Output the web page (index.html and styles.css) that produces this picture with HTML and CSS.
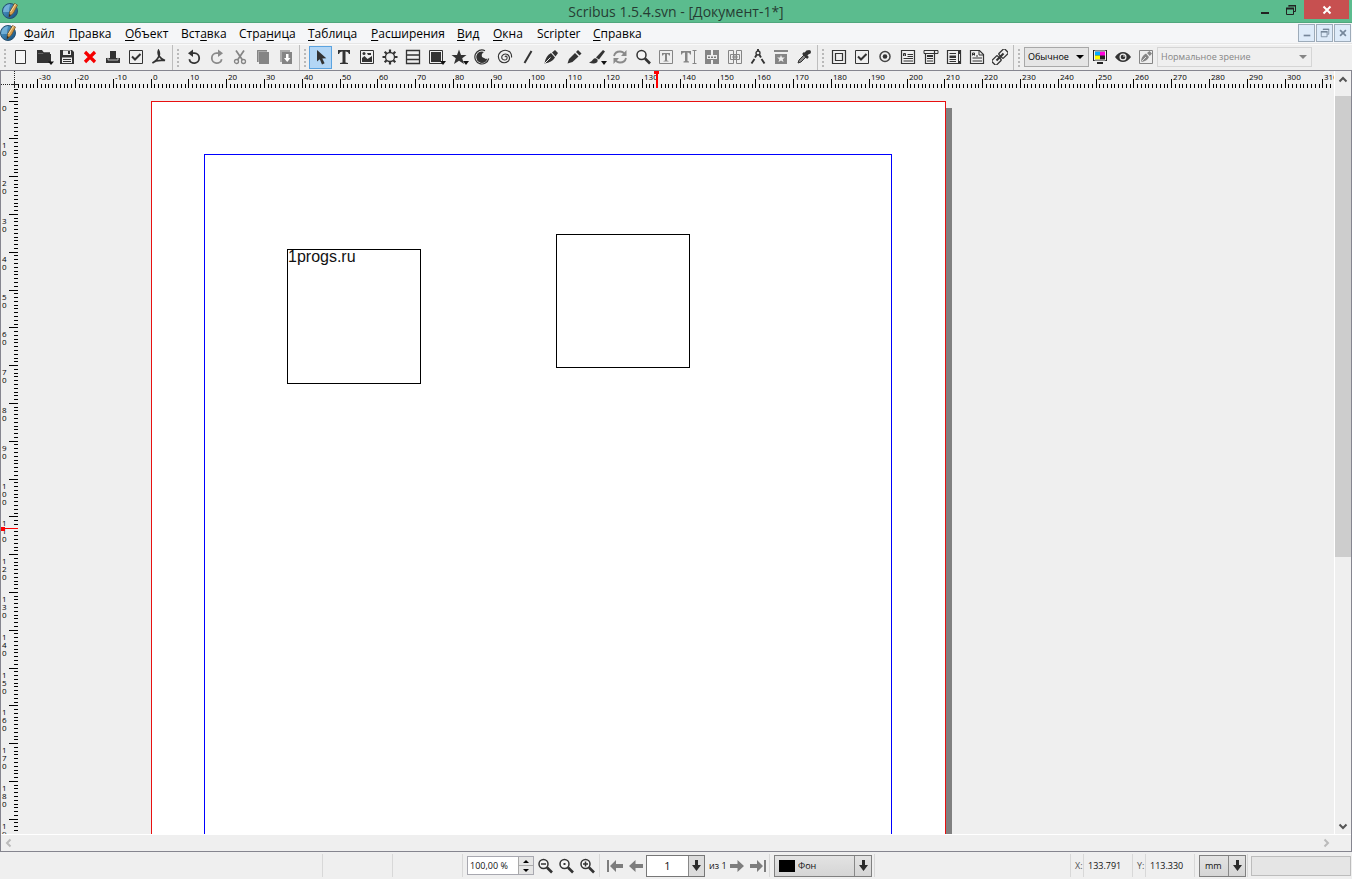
FILE: index.html
```html
<!DOCTYPE html>
<html lang="ru">
<head>
<meta charset="utf-8">
<title>Scribus 1.5.4.svn - [Документ-1*]</title>
<link rel="stylesheet" href="styles.css">
</head>
<body>
<svg class="sprite" aria-hidden="true">
  <defs>
    <linearGradient id="ball" x1="0" y1="0" x2="1" y2="1"><stop offset="0" stop-color="#5da9d8"/><stop offset="1" stop-color="#0d4a7c"/></linearGradient>
    <symbol id="logo" viewBox="0 0 18 18"><circle cx="9" cy="9" r="7.500" fill="url(#ball)" stroke="#27506e"/><path d="M2 10Q3 3 9 2Q8 6 8 10z" fill="#8fc7e8" opacity=".6"/><path d="M8 15L8.600 10L13.500 1.500L16.500 3L12.500 11z" fill="#d7a04f" stroke="#6e4a1e" stroke-width=".7"/><path d="M9.500 10L14.500 2" stroke="#f7dfaa" stroke-width="1"/><path d="M8 15L8.300 12L10 13z" fill="#222"/></symbol>
    <symbol id="new" viewBox="0 0 16 16"><path d="M2.500 1.500h10v13h-10z" fill="#f6f6f6" stroke="#333"/></symbol>
    <symbol id="open" viewBox="0 0 18 16"><path d="M1 1h5l1.500 2H14v2h1v9H1z" fill="#333"/><path d="M2 4.500h5l1-1h6" fill="none" stroke="#777" stroke-width=".7"/><path d="M12 12.500h6L15 16z" fill="#111"/></symbol>
    <symbol id="save" viewBox="0 0 16 16"><path d="M1 1h12l2 2v12H1z" fill="#333"/><path d="M4 1.500h8v4.500H4zM3 8.500h10v5.500H3z" fill="#eee"/><path d="M9 2h2v3H9zM4 10h8v1H4zM4 12h8v1H4z" fill="#333"/></symbol>
    <symbol id="close" viewBox="0 0 16 16"><path d="M3 3l10 10M13 3L3 13" stroke="#f50000" stroke-width="3.200"/></symbol>
    <symbol id="print" viewBox="0 0 16 16"><path d="M5 2h6v7h4v5H1V9h4z" fill="#333"/><path d="M3 8.500v2.500h10V8.500" fill="none" stroke="#ccc" stroke-width=".9"/></symbol>
    <symbol id="preflight" viewBox="0 0 16 16"><path d="M1.500 1.500h13v13h-13z" fill="none" stroke="#333"/><path d="M4 7.500L7 10.500L12.500 5" fill="none" stroke="#333" stroke-width="2"/></symbol>
    <symbol id="pdf" viewBox="0 0 16 16"><path d="M7.500 1.500Q9 4 8 7Q6.500 11 1.500 14Q5 10.500 14 11.500Q10 10 8 7Q6.500 4 7.500 1.500z" fill="none" stroke="#333" stroke-width="1.700"/></symbol>
    <symbol id="undo" viewBox="0 0 16 16"><path d="M5 4.200h3.500a5 5 0 1 1-5.200 6" fill="none" stroke="currentColor" stroke-width="1.800"/><path d="M2 4.200L7 0.500v7.500z" fill="currentColor"/></symbol>
    <symbol id="cut" viewBox="0 0 16 16"><path d="M4 1.500l6.500 9.500M12 1.500L5.500 11" stroke="#858585" stroke-width="1.700"/><circle cx="4.500" cy="12.500" r="2" fill="none" stroke="#858585" stroke-width="1.300"/><circle cx="11.500" cy="12.500" r="2" fill="none" stroke="#858585" stroke-width="1.300"/></symbol>
    <symbol id="copy" viewBox="0 0 16 16"><path d="M2 1h10v12H2z" fill="#aaa"/><path d="M4 3h10v12H4z" fill="#858585"/><path d="M2.500 13V1.500H12" fill="none" stroke="#858585"/></symbol>
    <symbol id="paste" viewBox="0 0 16 16"><path d="M2 1h10v12H2z" fill="#aaa"/><path d="M4 3h10v12H4z" fill="#858585"/><path d="M8 5h2.500v4h2L9.200 13L6 9h2z" fill="#fff"/></symbol>
    <symbol id="arrow" viewBox="0 0 16 16"><path d="M4 1v11.500l2.800-2.300L9 15.500l2.600-1.200L9.300 9.500l4 -.3z" fill="#333"/></symbol>
    <symbol id="text" viewBox="0 0 16 16"><path d="M2 1h12v4h-1Q12.500 2.300 9.500 2.500V13.500l2.500.5v1H4v-1l2.500-.5V2.500Q3.500 2.300 3 5H2z" fill="#333"/></symbol>
    <symbol id="image" viewBox="0 0 16 16"><path d="M1.500 1.500h13v13h-13z" fill="none" stroke="#333"/><path d="M3 13V9l2.500-2 3 3L13 7v6z" fill="#333"/><circle cx="5" cy="4.500" r="1.500" fill="#333"/><path d="M8 4h4v2H9z" fill="#333"/></symbol>
    <symbol id="gear" viewBox="0 0 16 16"><circle cx="8" cy="8" r="4.500" fill="none" stroke="#333" stroke-width="1.300"/><g stroke="#333" stroke-width="2.200"><path d="M8 .5v3M8 12.500v3M.5 8h3M12.500 8h3M2.700 2.700l2 2M11.300 11.300l2 2M13.300 2.700l-2 2M4.700 11.300l-2 2"/></g></symbol>
    <symbol id="table" viewBox="0 0 16 16"><path d="M1.500 1.500h13v13h-13zM1.500 6h13M1.500 10.500h13" fill="none" stroke="#333" stroke-width="1.300"/></symbol>
    <symbol id="shape" viewBox="0 0 18 16"><path d="M1.500 1.500h13v13h-13z" fill="none" stroke="#333"/><path d="M3 3h10v10H3z" fill="#333"/><path d="M12 12h6l-3 4z" fill="#111"/></symbol>
    <symbol id="star" viewBox="0 0 18 16"><path d="M8 0.500l2 5.500h5.500L11.200 9.200 13 15 8 11.700 3 15l1.800-5.800L.5 6H6z" fill="#333"/><path d="M12 12h6l-3 4z" fill="#111"/></symbol>
    <symbol id="arc" viewBox="0 0 16 16"><path d="M11 1.700A7 7 0 1 0 14.700 9.500" fill="none" stroke="#333" stroke-width="1.200"/><path d="M10 3A5.500 5.500 0 1 0 13.300 9.500Q9 11 7.500 8Q7 5 10 3z" fill="#333"/><path d="M2.500 8a5.500 5.500 0 0 1 4-5.300L8 8l5 2.500a5.500 5.500 0 0 1-10.500-2.500z" fill="#333"/></symbol>
    <symbol id="spiral" viewBox="0 0 16 16"><path d="M8 8q1-2 2 0q.5 3-2.500 3Q4 10.500 5 7Q7 4 10.500 5.500Q14 8 11.500 12Q7 15.500 3 12Q-.5 7 3.500 3Q8-.5 13 3Q15 5.500 14.500 8.500" fill="none" stroke="#333" stroke-width="1.100"/></symbol>
    <symbol id="line" viewBox="0 0 16 16"><path d="M4.500 14L11.500 2" stroke="#333" stroke-width="2"/></symbol>
    <symbol id="pen" viewBox="0 0 16 16"><path d="M1.500 14.500Q2.500 7 8 4l4 4.500Q9 13.500 1.500 14.500z" fill="#333"/><path d="M9 3.500L12 1l3 3-2.500 3.500z" fill="#333"/><path d="M2 14L7.500 8.500" stroke="#eee"/></symbol>
    <symbol id="pencil" viewBox="0 0 16 16"><path d="M1.500 14.500L3 10L9 4l3.500 3.500L6.500 13z" fill="#333"/><path d="M10 3l2-2 3.500 3.500-2 2z" fill="#333"/></symbol>
    <symbol id="brush" viewBox="0 0 18 16"><path d="M7 8.500L14 1l2 1.500L10 10.500z" fill="#333"/><path d="M0 13.500Q3 12.500 4 10.500Q6 8 8.500 10.500Q9.500 14 5 14.500Q2 14.500 0 13.500z" fill="#333"/><path d="M12 12h6l-3 4z" fill="#111"/></symbol>
    <symbol id="rotate" viewBox="0 0 16 16"><path d="M2 7Q3 2.500 8 2.500q3 0 4.500 2.500M14 9q-1 4.500-6 4.500-3 0-4.500-2.500" fill="none" stroke="#8a8a8a" stroke-width="1.800"/><path d="M14.500 1v6H9zM1.500 15V9H7z" fill="#8a8a8a"/></symbol>
    <symbol id="zoom" viewBox="0 0 16 16"><circle cx="6.500" cy="6" r="4.500" fill="#f5f5f5" stroke="#333" stroke-width="1.500"/><path d="M10 9.500l5 5" stroke="#333" stroke-width="2.600"/></symbol>
    <symbol id="textbox" viewBox="0 0 16 16"><path d="M1.500 1.500h13v13h-13z" fill="none" stroke="#858585"/><path d="M4 4h8v2.500H11Q11 5 9 5v6.500l1.500.5v.5h-5V12l1.500-.5V5Q5 5 5 6.500H4z" fill="#858585"/></symbol>
    <symbol id="textcur" viewBox="0 0 16 16"><path d="M0 2h10v3.500H9Q9 3.500 6.500 3.500V12l1.500.5v1H2.500v-1L4 12V3.500Q1 3.500 1 5.500H0zM11.500 1h4v1h-1.500v12h1.500v1h-4v-1H13V2h-1.500z" fill="#858585"/></symbol>
    <symbol id="link" viewBox="0 0 16 16"><path d="M1 1h6v5h2V1h6v14H9v-4H7v4H1z" fill="#858585"/><path d="M3 6h10v4H3z" fill="#eee"/><path d="M4 7.500h2v1.500H4zM7 7.500h2v1.500H7zM10 7.500h2v1.500h-2z" fill="#777"/></symbol>
    <symbol id="unlink" viewBox="0 0 16 16"><path d="M1.500 1.500h5v13h-5zM9.500 1.500h5v13h-5zM3.500 5.500h9v5h-9zM8 5.500v5M5 8h6" fill="none" stroke="#858585"/></symbol>
    <symbol id="measure" viewBox="0 0 16 16"><circle cx="8" cy="4" r="2" fill="none" stroke="#333" stroke-width="1.300"/><path d="M8 0v2M6.500 6L5 8.500M9.500 6L11 8.500M4.500 10L1.500 14.500M11.500 10l3 4.500" stroke="#333" stroke-width="1.900"/></symbol>
    <symbol id="props" viewBox="0 0 16 16"><path d="M1 1h14v2H1zM2 5h12v10H2z" fill="#858585"/><path d="M8 6l1 2.500h2.900l-2.200 1.700.8 2.800L8 11.400l-2.500 1.600.8-2.800-2.200-1.700H7z" fill="#eee"/></symbol>
    <symbol id="dropper" viewBox="0 0 16 16"><path d="M2 14l1-3 5-5 2 2-5 5z" fill="#888" stroke="#333"/><path d="M7 4l5 5" stroke="#333" stroke-width="2.500"/><path d="M9 6l3.500-3.500" stroke="#333" stroke-width="4"/><circle cx="13" cy="3" r="2" fill="#333"/></symbol>
    <symbol id="btn" viewBox="0 0 16 16"><path d="M1.500 1.500h13v13h-13zM4.500 4.500h7v7h-7z" fill="none" stroke="#333" stroke-width="1.200"/></symbol>
    <symbol id="radio" viewBox="0 0 16 16"><circle cx="8" cy="7.500" r="5" fill="none" stroke="#444" stroke-width="1.500"/><circle cx="8" cy="7.500" r="2.300" fill="#333"/></symbol>
    <symbol id="field" viewBox="0 0 16 16"><path d="M1.500 1.500h13v13h-13z" fill="none" stroke="#333" stroke-width="1.200"/><path d="M3.500 7V4.500h2V7M3.500 6h2M7.500 5.500H13M7.500 7.500H13M3.500 9.500H13M3.500 12H13" fill="none" stroke="#333"/></symbol>
    <symbol id="combo" viewBox="0 0 16 16"><path d="M1 1.500h14v3H1z" fill="none" stroke="#333"/><path d="M11.500 1.500v13h-9v-10" fill="none" stroke="#333" stroke-width="1.200"/><path d="M4 6h6v2H4zM4 9h6v1H4zM4 11.500h6v1H4z" fill="#333"/></symbol>
    <symbol id="list" viewBox="0 0 16 16"><path d="M1.500 1.500h13v13h-13z" fill="none" stroke="#333" stroke-width="1.200"/><path d="M3.500 4H10v1H3.500zM3.500 6.500H10V9H3.500zM3.500 10H10v1H3.500zM3.500 12H10v1H3.500zM12 1h3v14h-3z" fill="#333"/><path d="M13 5h1v7h-1z" fill="#eee"/></symbol>
    <symbol id="annot" viewBox="0 0 16 16"><path d="M1.500 1.500h9l4 4v9h-13z" fill="none" stroke="#333" stroke-width="1.200"/><path d="M10 1.500V6h4.500M3.500 6.500V4h2v2.500M3.500 5.500h2M7 7h2M3.500 9H13M3.500 12H13" fill="none" stroke="#333"/></symbol>
    <symbol id="chain" viewBox="0 0 16 16"><g transform="rotate(-45 8 8)" fill="none" stroke="#333" stroke-width="1.300"><rect x="-1" y="4.800" width="8" height="6.400" rx="1"/><rect x="9" y="4.800" width="8" height="6.400" rx="1"/><path d="M3 8h10" stroke-width="2"/></g></symbol>
    <symbol id="cmyk" viewBox="0 0 16 16"><path d="M1 1h14v11H1zM5 13h6v2H5z" fill="#222"/><path d="M3 2.500h5v4H3z" fill="#0af"/><path d="M8 2.500h5v4H8z" fill="#f0d"/><path d="M3 6.500h5v4H3z" fill="#ff0"/><path d="M2.500 2h11v9h-11z" fill="none" stroke="#eee"/></symbol>
    <symbol id="eye" viewBox="0 0 16 16"><path d="M0 8Q3.500 3 8 3t8 5Q12.500 13 8 13T0 8z" fill="#333"/><circle cx="8" cy="8" r="3.500" fill="#eee"/><circle cx="8" cy="8" r="2.300" fill="#333"/><circle cx="9" cy="7" r=".8" fill="#eee"/></symbol>
    <symbol id="edit" viewBox="0 0 16 16"><path d="M1.500 1.500h13v13h-13z" fill="#eee" stroke="#858585"/><path d="M3 13Q3 7 8 4.500l3 3.500Q9 12.500 3 13zM9 4L11.500 2 14 4.500L11.800 7z" fill="#858585"/><path d="M3.500 12.500L8 8" stroke="#ddd"/></symbol>
    <symbol id="zoomout" viewBox="0 0 16 16"><use href="#zoom"/><path d="M4 6h5" stroke="#333" stroke-width="1.500"/></symbol>
    <symbol id="zoomfit" viewBox="0 0 16 16"><use href="#zoom"/><path d="M5.500 5h2v2h-2z" fill="#333"/></symbol>
    <symbol id="zoomin" viewBox="0 0 16 16"><use href="#zoom"/><path d="M4 6h5M6.500 3.500v5" stroke="#333" stroke-width="1.500"/></symbol>
    <symbol id="prev" viewBox="0 0 16 16"><path d="M1 8l6.500-6v4H15v4H7.500v4z" fill="#7d7d7d"/></symbol>
    <symbol id="first" viewBox="0 0 16 16"><path d="M0 2h2v12H0z" fill="#7d7d7d"/><path d="M3 8l6-6v4h7v4H9v4z" fill="#7d7d7d"/></symbol>
    <symbol id="down" viewBox="0 0 9 11"><path d="M3 0h3v5h3L4.500 11 0 5h3z" fill="#2b2b2b"/></symbol>
    <symbol id="tri" viewBox="0 0 8 4"><path d="M0 0h8L4 4z" fill="currentColor"/></symbol>
    <symbol id="chev" viewBox="0 0 10 10"><path d="M1.500 6.500L5 3l3.500 3.500" fill="none" stroke="currentColor" stroke-width="2"/></symbol>
    <symbol id="min" viewBox="0 0 12 12"><path d="M2 8h8v2H2z" fill="currentColor"/></symbol>
    <symbol id="restore" viewBox="0 0 12 12"><path d="M4 2.500V1.500h6.500v6H9" fill="none" stroke="currentColor"/><path d="M1.500 4.500h7v6h-7z" fill="none" stroke="currentColor"/><path d="M1 3.500h8v2H1zM3.500 1H11v1.500H3.500z" fill="currentColor"/></symbol>
    <symbol id="x" viewBox="0 0 12 12"><path d="M2.500 2.500l7 7M9.500 2.500l-7 7" stroke="currentColor" stroke-width="2"/></symbol>
  </defs>
</svg>

<header class="titlebar">
  <svg class="logo"><use href="#logo"/></svg>
  <h1 class="title">Scribus 1.5.4.svn - [Документ-1*]</h1>
  <div class="window-buttons">
    <button aria-label="Свернуть"><svg><use href="#min"/></svg></button>
    <button aria-label="Восстановить"><svg><use href="#restore"/></svg></button>
    <button class="win-close" aria-label="Закрыть"><svg><use href="#x"/></svg></button>
  </div>
</header>

<nav class="menubar">
  <svg class="logo"><use href="#logo"/></svg>
  <div class="menus">
    <button><u>Ф</u>айл</button><button><u>П</u>равка</button><button><u>О</u>бъект</button><button>Вст<u>а</u>вка</button><button>Стра<u>н</u>ица</button><button><u>Т</u>аблица</button><button><u>Р</u>асширения</button><button><u>В</u>ид</button><button><u>О</u>кна</button><button>Scripter</button><button><u>С</u>правка</button>
  </div>
  <div class="mdi">
    <button aria-label="Свернуть документ"><svg><use href="#min"/></svg></button>
    <button aria-label="Восстановить документ"><svg><use href="#restore"/></svg></button>
    <button aria-label="Закрыть документ"><svg><use href="#x"/></svg></button>
  </div>
</nav>

<div class="toolbars">
  <div class="toolbar" data-icons="new open save close print preflight pdf"></div>
  <div class="toolbar" data-icons="undo redo cut copy paste"></div>
  <div class="toolbar" data-icons="arrow text image gear table shape star arc spiral line pen pencil brush rotate zoom textbox textcur link unlink measure props dropper"></div>
  <div class="toolbar" data-icons="btn preflight radio field combo list annot chain"></div>
  <div class="toolbar view-toolbar">
    <span class="pick quality"><select aria-label="Качество просмотра"><option>Обычное</option></select><svg><use href="#tri"/></svg></span>
    <div class="view-tools" data-icons="cmyk eye edit"></div>
    <span class="pick vision"><select aria-label="Имитация зрения" disabled><option>Нормальное зрение</option></select><svg><use href="#tri"/></svg></span>
  </div>
</div>

<main class="workspace">
  <svg class="corner"><path d="M13.500 0v18M0 13.500h17" stroke="#222" stroke-dasharray="1 1"/><path d="M10 13.500h7M13.500 10v7" stroke="#222"/></svg>
  <svg class="ruler-h" id="ruler-h"></svg>
  <svg class="ruler-v" id="ruler-v"></svg>
  <section class="canvas">
    <div class="shadow"></div>
    <div class="page"></div>
    <div class="margins"></div>
    <div class="frame text-frame">1progs.ru</div>
    <div class="frame empty-frame"></div>
  </section>
  <div class="scroll-v">
    <button aria-label="Вверх"><svg><use href="#chev"/></svg></button>
    <div class="track"><div class="thumb"></div></div>
    <button class="turn-down" aria-label="Вниз"><svg><use href="#chev"/></svg></button>
  </div>
  <div class="scroll-h">
    <button class="turn-left" aria-label="Влево"><svg><use href="#chev"/></svg></button>
    <button class="turn-right" aria-label="Вправо"><svg><use href="#chev"/></svg></button>
  </div>
</main>

<footer class="statusbar">
  <div class="cell message"></div>
  <div class="cell info"></div>
  <div class="cell info"></div>
  <div class="cell zooms">
    <div class="spin"><input aria-label="Масштаб" value="100,00 %"><div class="steps"><button aria-label="Больше"><svg class="flip"><use href="#tri"/></svg></button><button aria-label="Меньше"><svg><use href="#tri"/></svg></button></div></div>
    <button class="tool" aria-label="Уменьшить"><svg><use href="#zoomout"/></svg></button>
    <button class="tool" aria-label="100 %"><svg><use href="#zoomfit"/></svg></button>
    <button class="tool" aria-label="Увеличить"><svg><use href="#zoomin"/></svg></button>
  </div>
  <div class="cell pages">
    <button class="tool" aria-label="Первая страница"><svg><use href="#first"/></svg></button>
    <button class="tool" aria-label="Предыдущая страница"><svg><use href="#prev"/></svg></button>
    <div class="page-box"><input id="page-no" value="1"><button aria-label="Список страниц"><svg><use href="#down"/></svg></button></div>
    <label for="page-no">из 1</label>
    <button class="tool" aria-label="Следующая страница"><svg class="mirror"><use href="#prev"/></svg></button>
    <button class="tool" aria-label="Последняя страница"><svg class="mirror"><use href="#first"/></svg></button>
  </div>
  <div class="cell layer-cell">
    <span class="drop layer"><i class="swatch"></i><select aria-label="Слой"><option>Фон</option></select><b class="drop-mark"><svg><use href="#down"/></svg></b></span>
  </div>
  <div class="cell spacer"></div>
  <div class="cell axis">X:</div><div class="cell coord">133.791</div>
  <div class="cell axis">Y:</div><div class="cell coord">113.330</div>
  <div class="cell unit-cell"><span class="drop unit"><select aria-label="Единицы"><option>mm</option></select><b class="drop-mark"><svg><use href="#down"/></svg></b></span></div>
  <div class="progress"></div>
</footer>
<script src="script.js"></script>
</body>
</html>
```
FILE: styles.css
```css
* { box-sizing: border-box; }
body {
  margin: 0; height: 100vh; overflow: hidden; display: flex; flex-direction: column;
  background: #efefef; color: #111; font: 12px/16px "Open Sans", "Noto Sans", sans-serif;
}
button, input, select { font: inherit; color: inherit; margin: 0; padding: 0; border: 0; background: none; border-radius: 0; }
button { display: flex; align-items: center; justify-content: center; }
svg { display: block; flex: none; }
.sprite { position: absolute; width: 0; height: 0; }
.logo { width: 18px; height: 18px; }

.titlebar { display: grid; grid-template-columns: 103px 1fr 103px; height: 23px; flex: none; background: #5bbc8e; border-bottom: 1px solid #4fa77d; }
.titlebar .logo { margin: 2px 0 0 1px; }
.title { margin: 0; text-align: center; font-weight: 400; font-size: 14px; line-height: 24px; color: #263c33; }
.window-buttons { display: flex; justify-content: flex-end; color: #222; }
.window-buttons button { width: 26px; height: 19px; }
.window-buttons svg { width: 12px; height: 12px; }
.window-buttons .win-close { width: 45px; margin: 0 3px 0 0; background: #c75050; color: #fff; }

.menubar { display: flex; height: 21px; flex: none; background: #f5f6f8; border-bottom: 1px solid #e6e6e6; }
.menubar .logo { margin: 1px 7px 0 -1px; }
.menus { display: grid; grid-template-columns: 45px 56px 56px 58px 69px 63px 86px 36px 44px 56px 60px; padding-top: 2px; }
.menus button { justify-content: flex-start; white-space: nowrap; color: #000; }
.menus u { text-underline-offset: 2px; }
.mdi { display: flex; gap: 1px; margin: 0 1px 0 auto; padding-top: 1px; }
.mdi button { width: 17px; height: 18px; border: 1px solid #9dabb9; background: #deebf9; color: #76879a; }
.mdi svg { width: 10px; height: 10px; }

.toolbars { display: flex; height: 26px; flex: none; border-top: 1px solid #fafafa; }
.toolbar { display: flex; align-items: center; padding: 0 2px 1px 9px; border-right: 1px solid #bdbdbd;
  background: repeating-linear-gradient(#b9b9b9 0 2px, transparent 2px 4px) 4px 4px / 2px 18px no-repeat; }
.tool-btn { width: 23px; height: 23px; color: #333; }
.tool-btn svg { width: 16px; height: 16px; }
.tool-btn svg.wide { width: 18px; margin-left: 2px; }
.tool-btn.dim { color: #8a8a8a; }
.tool-btn.active { background: #b3d6f5; border: 1px solid #5ba3e0; }
.mirror { transform: scaleX(-1); }
.view-toolbar { flex: 1; border-right: 0; }
.view-tools { display: flex; }
.pick { position: relative; display: flex; height: 20px; border: 1px solid #a8a8a8; background: #e5e5e5; font-size: 9px; }
.pick select { appearance: none; width: 100%; padding-left: 3px; opacity: 1; }
.pick svg { position: absolute; right: 4px; top: 7px; width: 8px; height: 4px; pointer-events: none; }
.quality { width: 65px; color: #000; margin-left: 1px; margin-right: -1px; }
.vision { width: 155px; color: #858585; border-color: #d5d5d5; background: #efefef; }

.workspace { flex: 1; min-height: 0; display: grid; grid-template: 18px minmax(0, 1fr) 17px / 17px minmax(0, 1fr) 17px; border: 1px solid #85858f; }
.corner { width: 17px; height: 18px; }
.ruler-h, .ruler-v { width: 100%; height: 100%; overflow: hidden; font-size: 8px; fill: #000; }
.ruler-v { grid-row: 2; grid-column: 1; }
.canvas { position: relative; overflow: hidden; grid-row: 2; grid-column: 2; }
.page { position: absolute; left: 133px; top: 12px; width: 795px; height: 1124px; background: #fff; border: 1px solid #e81010; }
.shadow { position: absolute; left: 140px; top: 19px; width: 794px; height: 1124px; background: #808080; }
.margins { position: absolute; left: 186px; top: 65px; width: 688px; height: 1018px; border: 1px solid #0000ff; }
.frame { position: absolute; width: 134px; height: 135px; border: 1px solid #000; }
.text-frame { left: 269px; top: 160px; font: 16px/14px "Liberation Sans", Arial, sans-serif; }
.empty-frame { left: 538px; top: 145px; height: 134px; }
.scroll-v { grid-row: 1 / 3; grid-column: 3; display: flex; flex-direction: column; border-left: 1px solid #fff; color: #555; }
.scroll-v button { height: 17px; }
.scroll-v svg, .scroll-h svg { width: 10px; height: 10px; }
.track { flex: 1; padding-top: 8px; }
.thumb { height: 64%; background: #cdcdcd; }
.scroll-h { grid-row: 3; grid-column: 1 / 4; display: flex; justify-content: space-between; border-top: 1px solid #fff; padding-right: 17px; color: #bbb; }
.scroll-h button { width: 16px; }
.turn-down svg { transform: rotate(180deg); }
.turn-left svg { transform: rotate(-90deg); }
.turn-right svg { transform: rotate(90deg); }

.statusbar { display: flex; align-items: center; height: 27px; flex: none; font-size: 9px; padding: 2px 1px 2px 0; }
.cell { height: 23px; display: flex; align-items: center; border-right: 1px solid #d8d8d8; white-space: nowrap; }
.message { width: 323px; }
.info { width: 70px; }
.zooms { width: 137px; padding-left: 4px; }
.spin { display: flex; width: 67px; height: 19px; border: 1px solid #a8a8b0; background: #fff; }
.spin input { flex: 1; min-width: 0; padding-left: 2px; }
.steps { display: grid; width: 15px; background: #e5e5e5; border-left: 1px solid #aaa; }
.steps button + button { border-top: 1px solid #aaa; }
.steps svg { width: 6px; height: 3px; color: #000; }
.flip { transform: rotate(180deg); }
.tool { width: 21px; height: 21px; }
.tool svg { width: 16px; height: 16px; }
.pages { width: 170px; padding-left: 4px; }
.page-box { display: flex; width: 59px; height: 22px; border: 1px solid #777; background: #fff; margin-right: 4px; }
.page-box input { flex: 1; min-width: 0; text-align: center; font-size: 11px; }
.page-box button { width: 16px; background: #dcdcdc; border-left: 1px solid #888; }
.page-box svg, .drop svg { width: 9px; height: 11px; }
.pages label { width: 17px; }
.layer-cell { width: 105px; padding-left: 4px; }
.drop { display: flex; align-items: center; height: 22px; border: 1px solid #808080; background: linear-gradient(#e3e3e3, #d5d5d5); }
.drop select { appearance: none; flex: 1; min-width: 0; }
.drop-mark { display: flex; align-items: center; justify-content: center; width: 17px; height: 20px; border-left: 1px solid #888; }
.layer { width: 98px; padding-left: 4px; gap: 3px; }
.swatch { width: 16px; height: 12px; background: #000; }
.spacer { flex: 1; }
.axis { width: 13px; padding-left: 4px; color: #555; }
.coord { width: 49px; padding-left: 4px; }
.unit-cell { width: 53px; padding-left: 4px; }
.unit { width: 47px; padding-left: 5px; }
.progress { width: 100px; height: 20px; margin-left: 3px; border: 1px solid #bcbcbc; background: #e5e5e5; }
```
FILE: script.js
```js
const SVG = "http://www.w3.org/2000/svg";
const wide = ["open", "shape", "star", "brush"];

document.querySelectorAll("[data-icons]").forEach(bar => {
  bar.dataset.icons.split(" ").forEach(name => {
    const button = document.createElement("button");
    button.className = "tool-btn" + (name === "arrow" ? " active" : "") + (name === "redo" ? " dim" : "");
    button.setAttribute("aria-label", name);
    const mirrored = name === "redo";
    const css = mirrored ? "mirror" : wide.includes(name) ? "wide" : "";
    button.innerHTML = `<svg class="${css}"><use href="#${mirrored ? "undo" : name}"/></svg>`;
    bar.append(button);
  });
});

const PX_PER_MM = 3.78;

function add(parent, tag, attrs, text) {
  const el = document.createElementNS(SVG, tag);
  for (const key in attrs) el.setAttribute(key, attrs[key]);
  if (text) el.textContent = text;
  parent.append(el);
}

function drawHorizontal() {
  const ruler = document.getElementById("ruler-h");
  const length = ruler.getBoundingClientRect().width;
  ruler.replaceChildren();
  for (let mm = -35; 133 + mm * PX_PER_MM < length; mm++) {
    const x = Math.floor(133 + mm * PX_PER_MM);
    const major = mm % 10 === 0;
    add(ruler, "rect", { x, y: major ? 8 : 13, width: 1, height: major ? 9 : 4 });
    if (major) add(ruler, "text", { x: x + 2, y: 9 }, String(mm));
  }
  add(ruler, "path", { d: "M636 0h5v3h-1v14h-2V3h-2z", fill: "#f00" });
}

function drawVertical() {
  const ruler = document.getElementById("ruler-v");
  const length = ruler.getBoundingClientRect().height;
  ruler.replaceChildren();
  for (let mm = -3; 12 + mm * PX_PER_MM < length; mm++) {
    const y = Math.floor(12 + mm * PX_PER_MM);
    const major = mm % 10 === 0;
    add(ruler, "rect", { x: major ? 8 : 13, y, width: major ? 9 : 4, height: 1 });
    if (!major) continue;
    [...String(mm)].forEach((digit, i) => {
      const baseline = y + 10 + i * 8;
      if (baseline - 6 < length) add(ruler, "text", { x: 1, y: baseline }, digit);
    });
  }
  add(ruler, "path", { d: "M0 438h4v1h13v1H4v2H0z", fill: "#f00" });
}

function drawRulers() {
  drawHorizontal();
  drawVertical();
}

drawRulers();
addEventListener("resize", drawRulers);
```
